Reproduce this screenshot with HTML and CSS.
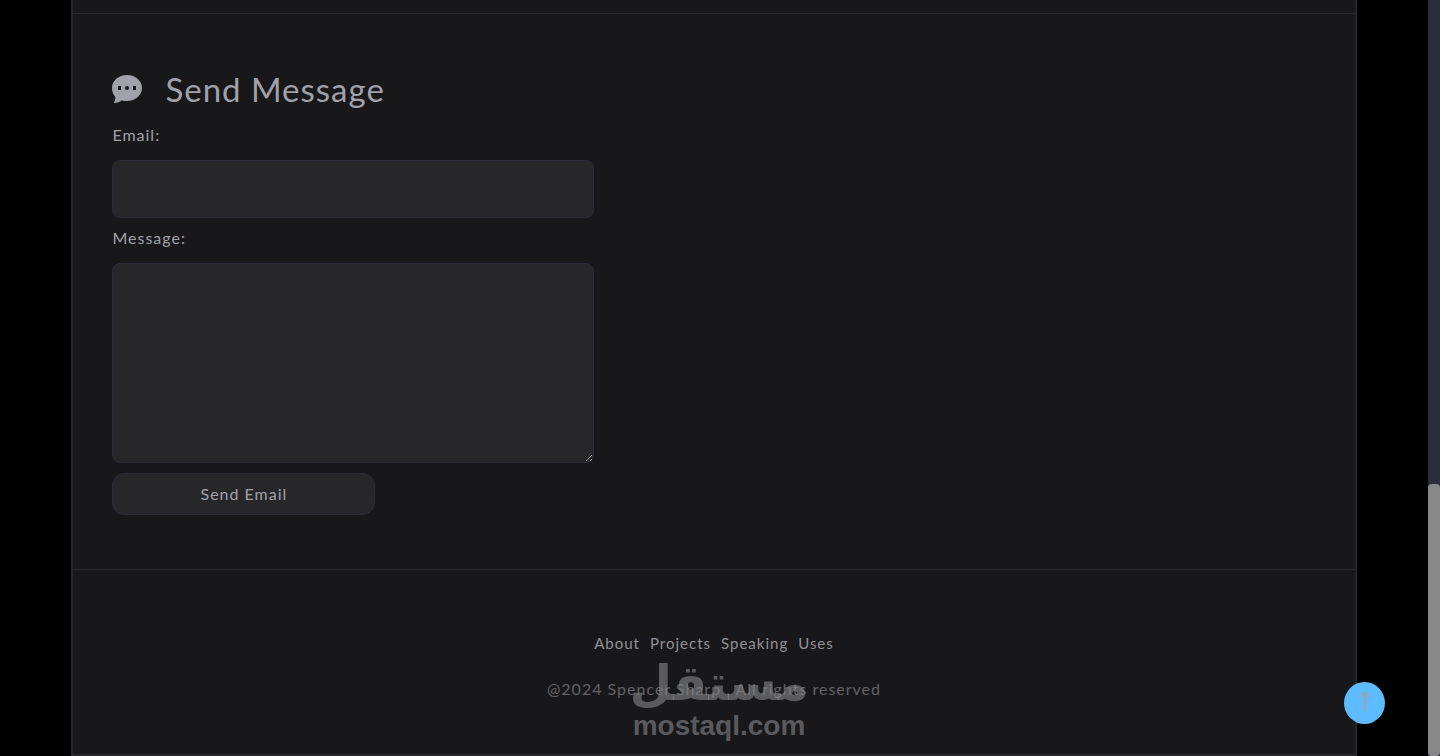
FILE: index.html
```html
<!doctype html>
<html lang="en">
<head>
  <meta charset="UTF-8">
  <meta name="viewport" content="width=device-width, initial-scale=1.0">
  <title>Spencer Sharp</title>
  <link rel="stylesheet" href="styles.css">
</head>
<body>
  <div class="page">
    <div class="container">
      <div class="previous"></div>
      <main class="contact">
        <h1 class="title">
          <svg class="title-icon" viewBox="0 0 30 30" aria-hidden="true">
            <path fill="currentColor" fill-rule="evenodd" d="M15 1C6.700 1 0 6.600 0 14C0 17.600 1.200 20.600 3.300 22.900C3.500 25 2.900 26.800 2 28.200C1.800 28.700 2 29 2.600 29C5.500 28.900 7.700 27.900 9.400 26.400C11.200 27 13 27 15 27C23.300 27 30 21.300 30 14C30 6.600 23.300 1 15 1ZM6 12H9V16H6ZM15 12A2 2 0 1 1 15 16A2 2 0 1 1 15 12ZM21 12H24V16H21Z"/>
          </svg>
          Send Message
        </h1>
        <form class="form">
          <label for="email">Email:</label>
          <input type="email" id="email" name="email">
          <label for="message">Message:</label>
          <textarea id="message" name="message"></textarea>
          <button type="submit">Send Email</button>
        </form>
      </main>
      <footer class="footer">
        <nav class="links">
          <a href="#about">About</a>
          <a href="#projects">Projects</a>
          <a href="#speaking">Speaking</a>
          <a href="#uses">Uses</a>
        </nav>
        <p class="copyright">@2024 Spencer Sharp , All rights reserved</p>
        <div class="watermark">
          <span class="watermark-ar" lang="ar" dir="rtl">مستقل</span>
          <span class="watermark-en">mostaql.com</span>
        </div>
      </footer>
    </div>
  </div>
  <div class="scrollbar"><div class="thumb"></div></div>
  <a class="to-top" href="#top" aria-label="Back to top">
    <svg viewBox="0 0 14 20" fill="none" stroke="currentColor" aria-hidden="true">
      <path stroke-width="2" d="M7 1V20"/>
      <path stroke-width="1.300" d="M1 7L7 1L13 7"/>
    </svg>
  </a>
</body>
</html>
```
FILE: styles.css
```css
* {
    box-sizing: border-box;
}
body {
    display: flex;
    min-height: 100vh;
    margin: 0;
    background-color: #000;
    color: #a1a1aa;
    font-family: Lato, "Liberation Sans", sans-serif;
    font-size: 16px;
    line-height: 20px;
    letter-spacing: 1px;
}
.page {
    flex: 1;
    display: flex;
    justify-content: center;
}
.container {
    display: flex;
    flex-direction: column;
    width: 90%;
    border: 2px solid #27272a;
    border-top: 0;
    background-color: #18181b;
}
.previous {
    height: 14px;
    border-bottom: 1px solid #27272a;
}
.contact {
    padding: 55px 39px 54px;
    border-bottom: 1px solid #27272a;
}
.title {
    display: flex;
    align-items: center;
    gap: 23px;
    margin: 0 0 16px;
    font-size: 33px;
    font-weight: 400;
    line-height: 40px;
}
.title-icon {
    width: 30px;
    height: 30px;
}
.form {
    display: flex;
    flex-direction: column;
    align-items: flex-start;
}
.form label {
    margin-bottom: 15px;
}
.form input,
.form textarea {
    width: 40%;
    padding: 10px;
    border: 1px solid #2b2b3a;
    border-radius: 8px;
    outline: none;
    background-color: #27272a;
    color: inherit;
    font: inherit;
    letter-spacing: inherit;
}
.form input {
    height: 58px;
    margin-bottom: 10px;
}
.form textarea {
    height: 200px;
    margin-bottom: 10px;
    resize: both;
}
.form button {
    width: 263px;
    height: 42px;
    border: 1px solid #2b2b3a;
    border-radius: 12px;
    background-color: #27272a;
    color: inherit;
    font: inherit;
    letter-spacing: inherit;
    cursor: pointer;
}
.footer {
    position: relative;
    flex: 1;
    display: flex;
    flex-direction: column;
    align-items: center;
    padding: 63px 40px 54px;
}
.links {
    display: flex;
    gap: 10px;
    font-size: 15px;
}
.links a {
    color: #929295;
    text-decoration: none;
}
.copyright {
    margin: 26px 0 0;
    color: #626266;
}
.watermark {
    position: absolute;
    top: 87px;
    left: 50%;
    display: flex;
    flex-direction: column;
    align-items: center;
    margin-left: 5px;
    transform: translateX(-50%);
    color: rgba(136, 136, 140, 0.6);
    font-weight: bold;
    letter-spacing: 0;
    pointer-events: none;
}
.watermark-ar {
    font-family: "DejaVu Sans", sans-serif;
    font-size: 49px;
    line-height: 54px;
}
.watermark-en {
    font-family: "Liberation Sans", sans-serif;
    font-size: 28px;
    line-height: 30px;
}
.scrollbar {
    display: flex;
    align-items: flex-end;
    width: 12px;
    background-color: #2b2d3b;
}
.thumb {
    width: 100%;
    height: 36%;
    border-radius: 4px;
    background-color: #888;
}
.to-top {
    position: fixed;
    right: 55px;
    bottom: 32px;
    display: flex;
    justify-content: center;
    align-items: flex-start;
    width: 41px;
    height: 42px;
    padding-top: 9px;
    border-radius: 50%;
    background-color: #5dbbff;
    color: #a1a1aa;
}
.to-top svg {
    width: 14px;
    height: 20px;
}
```
